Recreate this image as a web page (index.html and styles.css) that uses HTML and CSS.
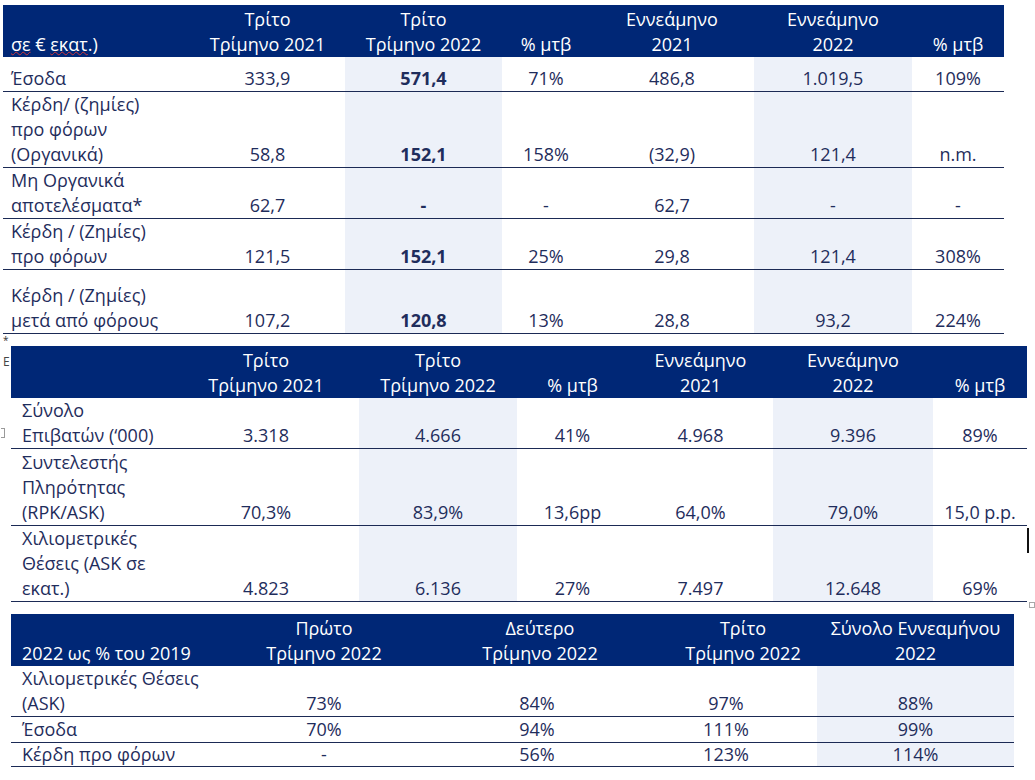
FILE: index.html
```html
<!DOCTYPE html>
<html lang="el">
<head>
<meta charset="utf-8">
<title>Αποτελέσματα</title>
<link rel="stylesheet" href="styles.css">
</head>
<body>
<div class="page">
  <table class="fin t1">
    <colgroup>
      <col style="width:187px"><col style="width:155px"><col style="width:157px"><col style="width:88px"><col style="width:164px"><col style="width:158px"><col style="width:92px">
    </colgroup>
    <thead>
      <tr>
        <th class="lbl"><span class="spell">σε</span> € <span class="spell">εκατ</span>.)</th>
        <th>Τρίτο<br>Τρίμηνο 2021</th>
        <th>Τρίτο<br>Τρίμηνο 2022</th>
        <th>% μτβ</th>
        <th>Εννεάμηνο<br>2021</th>
        <th>Εννεάμηνο<br>2022</th>
        <th>% μτβ</th>
      </tr>
    </thead>
    <tbody>
      <tr class="r-top">
        <td class="lbl">Έσοδα</td><td>333,9</td><td class="sh b">571,4</td><td>71%</td><td>486,8</td><td class="sh">1.019,5</td><td>109%</td>
      </tr>
      <tr>
        <td class="lbl">Κέρδη/ (ζημίες)<br>προ φόρων<br>(Οργανικά)</td><td>58,8</td><td class="sh b">152,1</td><td>158%</td><td>(32,9)</td><td class="sh">121,4</td><td>n.m.</td>
      </tr>
      <tr>
        <td class="lbl">Μη Οργανικά<br>αποτελέσματα*</td><td>62,7</td><td class="sh b">-</td><td>-</td><td>62,7</td><td class="sh">-</td><td>-</td>
      </tr>
      <tr>
        <td class="lbl">Κέρδη / (Ζημίες)<br>προ φόρων</td><td>121,5</td><td class="sh b">152,1</td><td>25%</td><td>29,8</td><td class="sh">121,4</td><td>308%</td>
      </tr>
      <tr class="r-gap">
        <td class="lbl">Κέρδη / (Ζημίες)<br>μετά από φόρους</td><td>107,2</td><td class="sh b">120,8</td><td>13%</td><td>28,8</td><td class="sh">93,2</td><td>224%</td>
      </tr>
    </tbody>
  </table>

  <div class="footnote">*</div>

  <table class="fin t2">
    <colgroup>
      <col style="width:162px"><col style="width:186px"><col style="width:158px"><col style="width:111px"><col style="width:145px"><col style="width:160px"><col style="width:94px">
    </colgroup>
    <thead>
      <tr>
        <th class="lbl"></th>
        <th>Τρίτο<br>Τρίμηνο 2021</th>
        <th>Τρίτο<br>Τρίμηνο 2022</th>
        <th>% μτβ</th>
        <th>Εννεάμηνο<br>2021</th>
        <th>Εννεάμηνο<br>2022</th>
        <th>% μτβ</th>
      </tr>
    </thead>
    <tbody>
      <tr>
        <td class="lbl">Σύνολο<br>Επιβατών (‘000)</td><td>3.318</td><td class="sh">4.666</td><td>41%</td><td>4.968</td><td class="sh">9.396</td><td>89%</td>
      </tr>
      <tr class="r-one">
        <td class="lbl">Συντελεστής<br>Πληρότητας<br>(RPK/ASK)</td><td>70,3%</td><td class="sh">83,9%</td><td>13,6pp</td><td>64,0%</td><td class="sh">79,0%</td><td>15,0 p.p.</td>
      </tr>
      <tr>
        <td class="lbl">Χιλιομετρικές<br>Θέσεις (ASK σε<br>εκατ.)</td><td>4.823</td><td class="sh">6.136</td><td>27%</td><td>7.497</td><td class="sh">12.648</td><td>69%</td>
      </tr>
    </tbody>
  </table>

  <table class="fin t3">
    <colgroup>
      <col style="width:226px"><col style="width:174px"><col style="width:258px"><col style="width:148px"><col style="width:197px">
    </colgroup>
    <thead>
      <tr>
        <th class="lbl">2022 ως % του 2019</th>
        <th>Πρώτο<br>Τρίμηνο 2022</th>
        <th>Δεύτερο<br>Τρίμηνο 2022</th>
        <th>Τρίτο<br>Τρίμηνο 2022</th>
        <th>Σύνολο Εννεαμήνου<br>2022</th>
      </tr>
    </thead>
    <tbody>
      <tr>
        <td class="lbl">Χιλιομετρικές Θέσεις<br>(ASK)</td><td>73%</td><td class="off2">84%</td><td class="off3">97%</td><td class="sh">88%</td>
      </tr>
      <tr>
        <td class="lbl">Έσοδα</td><td>70%</td><td class="off2">94%</td><td class="off3">111%</td><td class="sh">99%</td>
      </tr>
      <tr class="r-last">
        <td class="lbl">Κέρδη προ φόρων</td><td>-</td><td class="off2">56%</td><td class="off3">123%</td><td class="sh">114%</td>
      </tr>
    </tbody>
  </table>

  <span class="stray stray-e">E</span>
  <span class="stray stray-mark"></span>
  <span class="stray stray-bar"></span>
  <span class="stray stray-handle"></span>
</div>
</body>
</html>
```

FILE: styles.css
```css
html, body {
  margin: 0;
  padding: 0;
  background: #ffffff;
}

.page {
  position: relative;
  width: 1035px;
  height: 780px;
  overflow: hidden;
  padding-top: 5px;
  box-sizing: border-box;
}

.fin {
  border-collapse: collapse;
  table-layout: fixed;
  font-family: "Open Sans", "Noto Sans", sans-serif;
  font-size: 18px;
  line-height: 25px;
  color: #1f2d5c;
}

.fin th {
  background: #002776;
  color: #ffffff;
  font-weight: normal;
  vertical-align: bottom;
  text-align: center;
  padding: 2px 0 0 0;
  white-space: nowrap;
}

.fin td {
  vertical-align: bottom;
  text-align: center;
  padding: 0;
  border-bottom: 1px solid #1b2a55;
  white-space: nowrap;
}

.fin .lbl {
  text-align: left;
}

.fin td.sh {
  background: #edf1f9;
}

.fin td.b {
  font-weight: bold;
}

.spell {
  text-decoration: underline wavy #d0353a;
  text-decoration-thickness: 1px;
  text-underline-offset: 0px;
}

/* table 1 */
.t1 {
  margin-left: 3px;
  width: 1001px;
}

.t1 .lbl {
  padding-left: 8px;
}

.t1 .r-top td {
  padding-top: 9px;
}

.t1 .r-gap td {
  padding-top: 13px;
}

.footnote {
  height: 12px;
  overflow: hidden;
  font-family: "Open Sans", sans-serif;
  font-size: 10px;
  line-height: 12px;
  color: #333333;
  padding-left: 3px;
}

/* table 2 */
.t2 {
  margin-left: 11px;
  width: 1016px;
}

.t2 .lbl {
  padding-left: 11px;
}

.t2 .r-one td {
  padding-top: 1px;
}

/* table 3 */
.t3 {
  margin-top: 12px;
  margin-left: 11px;
  width: 1003px;
}

.t3 .lbl {
  padding-left: 11px;
}

.t3 td.off2 {
  padding-right: 6px;
}

.t3 td.off3 {
  padding-right: 34px;
}

.t3 .r-last td {
  line-height: 23px;
}

/* editor artefacts around the tables */
.stray {
  position: absolute;
  display: block;
}

.stray-e {
  left: 3px;
  top: 355px;
  font-family: "Open Sans", sans-serif;
  font-size: 12px;
  line-height: 14px;
  color: #444444;
}

.stray-mark {
  left: 1px;
  top: 428px;
  width: 3px;
  height: 8px;
  border: 1px solid #9a9a9a;
  border-left: none;
}

.stray-bar {
  left: 1027px;
  top: 528px;
  width: 2px;
  height: 25px;
  background: #111111;
}

.stray-handle {
  left: 1029px;
  top: 602px;
  width: 6px;
  height: 6px;
  border: 1px solid #a8a8a8;
  box-sizing: border-box;
}
```
